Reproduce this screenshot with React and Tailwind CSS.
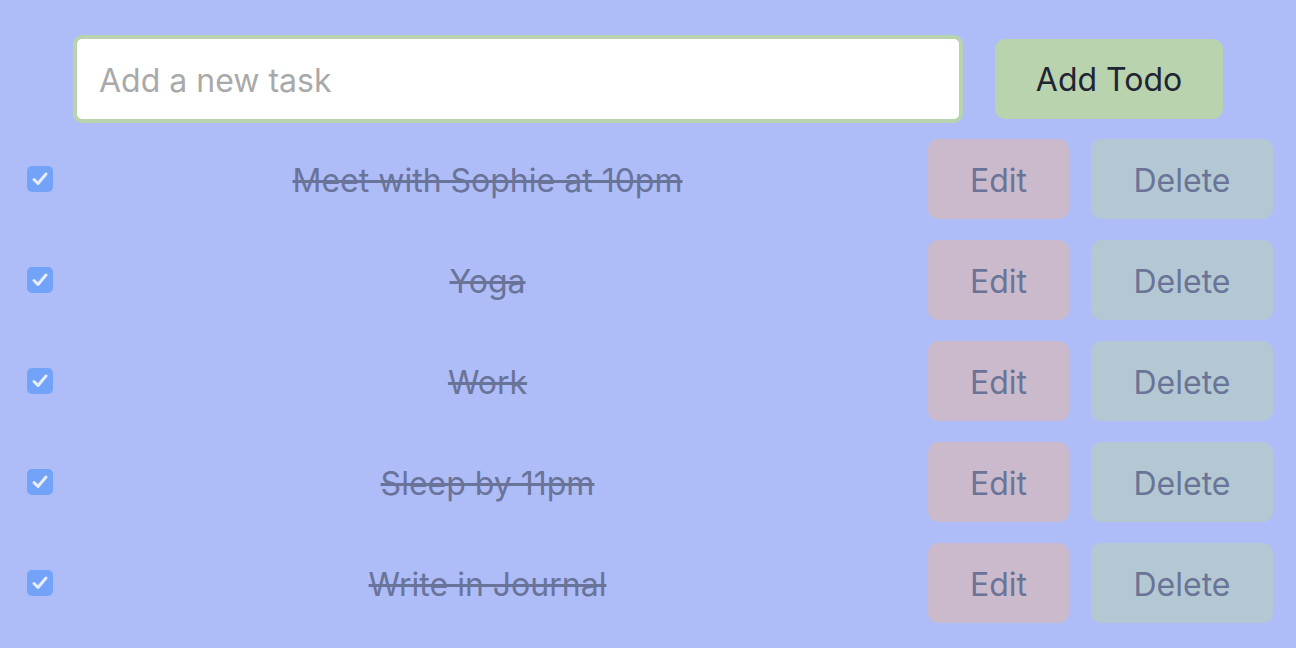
import React, { useState } from 'react';

const initialTodos = [
    { id: 1, text: 'Meet with Sophie at 10pm', done: true },
    { id: 2, text: 'Yoga', done: true },
    { id: 3, text: 'Work', done: true },
    { id: 4, text: 'Sleep by 11pm', done: true },
    { id: 5, text: 'Write in Journal', done: true },
];

function Check({ checked, onChange }) {
    return (
        <button
            onClick={onChange}
            className="w-[26px] h-[26px] rounded-[5px] bg-[#73a3f8] flex items-center justify-center shrink-0"
        >
            {checked && (
                <svg width="26" height="26" viewBox="0 0 26 26" fill="none">
                    <path d="M7 13.5 L11 17.5 L19 8" stroke="#e8edfb" strokeWidth="3" strokeLinecap="round" strokeLinejoin="round" />
                </svg>
            )}
        </button>
    );
}

export default function App() {
    const [todos, setTodos] = useState(initialTodos);
    const [task, setTask] = useState('');

    const toggle = (id) => setTodos(todos.map(t => (t.id === id ? { ...t, done: !t.done } : t)));

    return (
        <div className="min-h-[648px] w-full bg-[#aebcf8] font-['Inter',sans-serif] text-[32px] pt-[35px]">
            {/* New task input */}
            <div className="flex items-center gap-8 px-[73px]">
                <input
                    value={task}
                    onChange={e => setTask(e.target.value)}
                    placeholder="Add a new task"
                    className="flex-1 h-[88px] bg-white border-4 border-[#b8d4ae] rounded-[9px] px-[22px] pt-[2px] text-[32px] text-[#222838] placeholder-[#a9a9a9] outline-none"
                />
                <button className="w-[228px] h-[80px] bg-[#b8d3ae] rounded-[10px] pt-[2px] text-[32px] text-[#1f2535]">
                    Add Todo
                </button>
            </div>

            {/* Todo list */}
            <div className="flex flex-col gap-[21px] mt-4 pl-[27px] pr-[23px]">
                {todos.map(todo => (
                    <div key={todo.id} className="flex items-center h-[80px]">
                        <Check checked={todo.done} onChange={() => toggle(todo.id)} />
                        <div className={`flex-1 text-center pt-[3px] pr-[6px] text-[32px] text-[#6a7398] ${todo.done ? 'line-through' : ''}`}>
                            {todo.text}
                        </div>
                        <button className="w-[141px] h-[80px] bg-[#cbbacb] rounded-[10px] pt-[3px] text-[32px] text-[#6a7398]">Edit</button>
                        <button className="w-[182px] h-[80px] ml-[22px] bg-[#b4c8d3] rounded-[10px] pt-[3px] text-[32px] text-[#6a7398]">Delete</button>
                    </div>
                ))}
            </div>
        </div>
    );
}
